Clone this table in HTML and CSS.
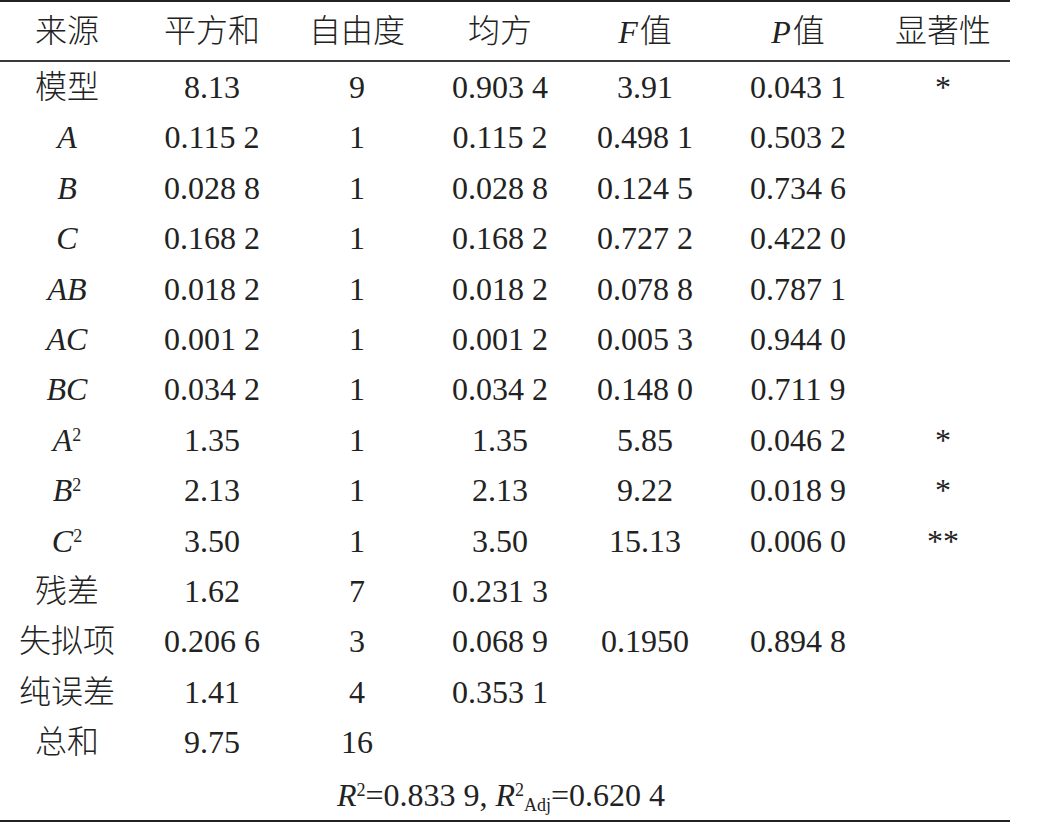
FILE: index.html
```html
<!DOCTYPE html>
<html>
<head>
<meta charset="utf-8">
<title>方差分析</title>
<link rel="stylesheet" href="styles.css">
</head>
<body>
<div class="anova">
  <div class="row head">
    <div class="c"><span class="cjk">来源</span></div><div class="c"><span class="cjk">平方和</span></div><div class="c"><span class="cjk">自由度</span></div><div class="c"><span class="cjk">均方</span></div><div class="c"><i class="var">F</i><span class="cjk">值</span></div><div class="c"><i class="var">P</i><span class="cjk">值</span></div><div class="c last"><span class="cjk">显著性</span></div>
  </div>
  <div class="body">
    <div class="row"><div class="c"><span class="cjk">模型</span></div><div class="c">8.13</div><div class="c">9</div><div class="c">0.903 4</div><div class="c">3.91</div><div class="c">0.043 1</div><div class="c last">*</div></div>
    <div class="row"><div class="c"><i>A</i></div><div class="c">0.115 2</div><div class="c">1</div><div class="c">0.115 2</div><div class="c">0.498 1</div><div class="c">0.503 2</div><div class="c last"></div></div>
    <div class="row"><div class="c"><i>B</i></div><div class="c">0.028 8</div><div class="c">1</div><div class="c">0.028 8</div><div class="c">0.124 5</div><div class="c">0.734 6</div><div class="c last"></div></div>
    <div class="row"><div class="c"><i>C</i></div><div class="c">0.168 2</div><div class="c">1</div><div class="c">0.168 2</div><div class="c">0.727 2</div><div class="c">0.422 0</div><div class="c last"></div></div>
    <div class="row"><div class="c"><i>AB</i></div><div class="c">0.018 2</div><div class="c">1</div><div class="c">0.018 2</div><div class="c">0.078 8</div><div class="c">0.787 1</div><div class="c last"></div></div>
    <div class="row"><div class="c"><i>AC</i></div><div class="c">0.001 2</div><div class="c">1</div><div class="c">0.001 2</div><div class="c">0.005 3</div><div class="c">0.944 0</div><div class="c last"></div></div>
    <div class="row"><div class="c"><i>BC</i></div><div class="c">0.034 2</div><div class="c">1</div><div class="c">0.034 2</div><div class="c">0.148 0</div><div class="c">0.711 9</div><div class="c last"></div></div>
    <div class="row"><div class="c"><i>A</i><span class="sup">2</span></div><div class="c">1.35</div><div class="c">1</div><div class="c">1.35</div><div class="c">5.85</div><div class="c">0.046 2</div><div class="c last">*</div></div>
    <div class="row"><div class="c"><i>B</i><span class="sup">2</span></div><div class="c">2.13</div><div class="c">1</div><div class="c">2.13</div><div class="c">9.22</div><div class="c">0.018 9</div><div class="c last">*</div></div>
    <div class="row"><div class="c"><i>C</i><span class="sup">2</span></div><div class="c">3.50</div><div class="c">1</div><div class="c">3.50</div><div class="c">15.13</div><div class="c">0.006 0</div><div class="c last">**</div></div>
    <div class="row"><div class="c"><span class="cjk">残差</span></div><div class="c">1.62</div><div class="c">7</div><div class="c">0.231 3</div><div class="c"></div><div class="c"></div><div class="c last"></div></div>
    <div class="row"><div class="c"><span class="cjk">失拟项</span></div><div class="c">0.206 6</div><div class="c">3</div><div class="c">0.068 9</div><div class="c">0.1950</div><div class="c">0.894 8</div><div class="c last"></div></div>
    <div class="row"><div class="c"><span class="cjk">纯误差</span></div><div class="c">1.41</div><div class="c">4</div><div class="c">0.353 1</div><div class="c"></div><div class="c"></div><div class="c last"></div></div>
    <div class="row"><div class="c"><span class="cjk">总和</span></div><div class="c">9.75</div><div class="c">16</div><div class="c"></div><div class="c"></div><div class="c"></div><div class="c last"></div></div>
    <div class="note"><i>R</i><span class="sup">2</span>=0.833 9, <i>R</i><span class="sup">2</span><span class="sub">Adj</span>=0.620 4</div>
  </div>
</div>
</body>
</html>
```

FILE: styles.css
```css
html, body {
  margin: 0;
  padding: 0;
  background: #ffffff;
}

.anova {
  width: 1010px;
  font-family: "Liberation Serif", "Times New Roman", "DejaVu Serif", serif;
  font-size: 32px;
  font-weight: 400;
  color: #222222;
  border-top: 2px solid #222222;
  border-bottom: 2px solid #222222;
}

.anova i {
  font-style: italic;
}

.cjk {
  display: inline-block;
  font-family: "Noto Sans CJK SC", sans-serif;
  font-weight: 300;
  transform: translateY(-3px);
}

.var {
  display: inline-block;
  padding-right: 2px;
  transform: translateY(-2px);
}

.row {
  display: grid;
  grid-template-columns: 134px 156px 134px 152px 138px 168px 128px;
  height: 50.4px;
  line-height: 50.4px;
}

.row.head {
  height: 58px;
  line-height: 58px;
  border-bottom: 2px solid #3a3a3a;
}

.c {
  text-align: center;
  white-space: nowrap;
}

.c.last {
  padding-right: 6px;
}

.sup {
  font-size: 18px;
  line-height: 1;
  vertical-align: 10px;
}

.sub {
  font-size: 18px;
  line-height: 1;
  vertical-align: -5px;
}

.note {
  height: 53px;
  line-height: 56px;
  text-align: center;
  padding-right: 8px;
}
```
